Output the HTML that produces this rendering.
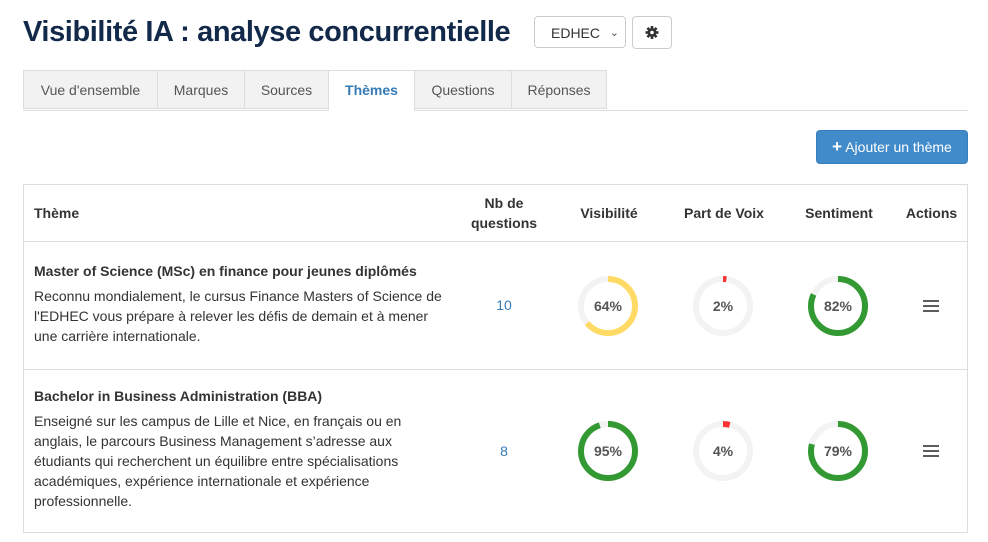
<!DOCTYPE html><html><head><meta charset="utf-8"><style>
body{margin:0;background:#fff;font-family:"Liberation Sans",sans-serif;color:#333;width:988px;height:542px;position:relative;overflow:hidden}
.a{position:absolute}
h1{position:absolute;left:23px;top:16px;margin:0;font-size:29px;font-weight:bold;color:#12294a;letter-spacing:-0.4px}
.sel{left:534px;top:16px;width:92px;height:32px;border:1px solid #ccc;border-radius:4px;font-size:14px;line-height:32px;box-sizing:border-box;padding-left:16px;color:#333}
.gear{left:632px;top:16px;width:40px;height:33px;border:1px solid #ccc;border-radius:4px;box-sizing:border-box}
.tabs{left:23px;top:70px;width:945px;height:40px;border-bottom:1px solid #ddd}
.tab{position:absolute;top:0;height:39px;background:#f2f2f2;border:1px solid #ddd;box-sizing:border-box;font-size:14px;line-height:38px;text-align:center;color:#555}
.tab.act{background:#fff;border-bottom-color:#fff;color:#337ab7;font-weight:bold;height:41px}
.btn{left:816px;top:130px;width:152px;height:34px;background:#428bca;border:1px solid #357ebd;border-radius:4px;box-sizing:border-box;color:#fff;font-size:14px;line-height:32px;text-align:center}
.tbl{left:23px;top:184px;width:945px;height:349px;border:1px solid #ddd;box-sizing:border-box}
.hl{position:absolute;left:0;width:943px;height:1px;background:#ddd}
.th{position:absolute;font-size:14px;font-weight:bold;color:#333;text-align:center;line-height:20px}
.t{font-size:14px;line-height:20px;color:#333}
.n{position:absolute;font-size:14px;color:#337ab7;width:40px;text-align:center}
.d{position:absolute;width:62px;height:62px}
.hm{position:absolute;width:16px;height:12px}
</style></head><body>
<h1>Visibilité IA : analyse concurrentielle</h1>
<div class="a sel">EDHEC<span style="position:absolute;right:6px;top:0;font-size:11px;color:#555">&#8964;</span></div>
<div class="a gear"><svg width="38" height="31" viewBox="0 0 38 31"><g transform="translate(19,15.5)" fill="#333"><circle r="4.5"/><g stroke="#333" stroke-width="2.6"><line x1="0" y1="-6.5" x2="0" y2="6.5"/><line x1="-6.5" y1="0" x2="6.5" y2="0"/><line x1="-4.6" y1="-4.6" x2="4.6" y2="4.6"/><line x1="-4.6" y1="4.6" x2="4.6" y2="-4.6"/></g><circle r="1.8" fill="#fff"/></g></svg></div>
<div class="a tabs">
<div class="tab" style="left:0;width:135px">Vue d'ensemble</div>
<div class="tab" style="left:134px;width:88px">Marques</div>
<div class="tab" style="left:221px;width:85px">Sources</div>
<div class="tab act" style="left:305px;width:87px">Thèmes</div>
<div class="tab" style="left:391px;width:98px">Questions</div>
<div class="tab" style="left:488px;width:96px">Réponses</div>
</div>
<div class="a btn"><b style="font-size:17px">+</b> Ajouter un thème</div>
<div class="a tbl">
<div class="th" style="left:10px;top:18px">Thème</div>
<div class="th" style="left:440px;top:8px;width:80px">Nb de<br>questions</div>
<div class="th" style="left:535px;top:18px;width:100px">Visibilité</div>
<div class="th" style="left:650px;top:18px;width:100px">Part de Voix</div>
<div class="th" style="left:765px;top:18px;width:100px">Sentiment</div>
<div class="th" style="left:870px;top:18px;width:75px">Actions</div>
<div class="hl" style="top:56px"></div>
<div class="a t" style="left:10px;top:76px;width:420px"><b>Master of Science (MSc) en finance pour jeunes diplômés</b><div style="margin-top:5px">Reconnu mondialement, le cursus Finance Masters of Science de l'EDHEC vous prépare à relever les défis de demain et à mener une carrière internationale.</div></div>
<div class="n" style="left:460px;top:112px">10</div>
<div class="hl" style="top:184px"></div>
<div class="a t" style="left:10px;top:201px;width:405px"><b>Bachelor in Business Administration (BBA)</b><div style="margin-top:5px">Enseigné sur les campus de Lille et Nice, en français ou en anglais, le parcours Business Management s’adresse aux étudiants qui recherchent un équilibre entre spécialisations académiques, expérience internationale et expérience professionnelle.</div></div>
<div class="n" style="left:460px;top:258px">8</div>
</div>
<svg class="d" style="left:577px;top:275px" viewBox="0 0 62 62"><circle cx="31" cy="31" r="27" fill="none" stroke="#f3f3f3" stroke-width="6"/><circle cx="31" cy="31" r="27" fill="none" stroke="#ffdb66" stroke-width="6" stroke-dasharray="108.6 200" transform="rotate(-90 31 31)"/><text x="31" y="36" text-anchor="middle" font-family="Liberation Sans" font-weight="bold" font-size="14" fill="#555">64%</text></svg>
<svg class="d" style="left:692px;top:275px" viewBox="0 0 62 62"><circle cx="31" cy="31" r="27" fill="none" stroke="#f3f3f3" stroke-width="6"/><circle cx="31" cy="31" r="27" fill="none" stroke="#f33" stroke-width="6" stroke-dasharray="3.4 200" transform="rotate(-90 31 31)"/><text x="31" y="36" text-anchor="middle" font-family="Liberation Sans" font-weight="bold" font-size="14" fill="#555">2%</text></svg>
<svg class="d" style="left:807px;top:275px" viewBox="0 0 62 62"><circle cx="31" cy="31" r="27" fill="none" stroke="#f3f3f3" stroke-width="6"/><circle cx="31" cy="31" r="27" fill="none" stroke="#339933" stroke-width="6" stroke-dasharray="139 200" transform="rotate(-90 31 31)"/><text x="31" y="36" text-anchor="middle" font-family="Liberation Sans" font-weight="bold" font-size="14" fill="#555">82%</text></svg>
<svg class="d" style="left:577px;top:420px" viewBox="0 0 62 62"><circle cx="31" cy="31" r="27" fill="none" stroke="#f3f3f3" stroke-width="6"/><circle cx="31" cy="31" r="27" fill="none" stroke="#339933" stroke-width="6" stroke-dasharray="161 200" transform="rotate(-90 31 31)"/><text x="31" y="36" text-anchor="middle" font-family="Liberation Sans" font-weight="bold" font-size="14" fill="#555">95%</text></svg>
<svg class="d" style="left:692px;top:420px" viewBox="0 0 62 62"><circle cx="31" cy="31" r="27" fill="none" stroke="#f3f3f3" stroke-width="6"/><circle cx="31" cy="31" r="27" fill="none" stroke="#f33" stroke-width="6" stroke-dasharray="6.8 200" transform="rotate(-90 31 31)"/><text x="31" y="36" text-anchor="middle" font-family="Liberation Sans" font-weight="bold" font-size="14" fill="#555">4%</text></svg>
<svg class="d" style="left:807px;top:420px" viewBox="0 0 62 62"><circle cx="31" cy="31" r="27" fill="none" stroke="#f3f3f3" stroke-width="6"/><circle cx="31" cy="31" r="27" fill="none" stroke="#339933" stroke-width="6" stroke-dasharray="134 200" transform="rotate(-90 31 31)"/><text x="31" y="36" text-anchor="middle" font-family="Liberation Sans" font-weight="bold" font-size="14" fill="#555">79%</text></svg>
<svg class="hm" style="left:923px;top:300px" viewBox="0 0 16 12"><g stroke="#333" stroke-width="1.6"><line x1="0" y1="1" x2="16" y2="1"/><line x1="0" y1="6" x2="16" y2="6"/><line x1="0" y1="11" x2="16" y2="11"/></g></svg>
<svg class="hm" style="left:923px;top:445px" viewBox="0 0 16 12"><g stroke="#333" stroke-width="1.6"><line x1="0" y1="1" x2="16" y2="1"/><line x1="0" y1="6" x2="16" y2="6"/><line x1="0" y1="11" x2="16" y2="11"/></g></svg>
</body></html>
